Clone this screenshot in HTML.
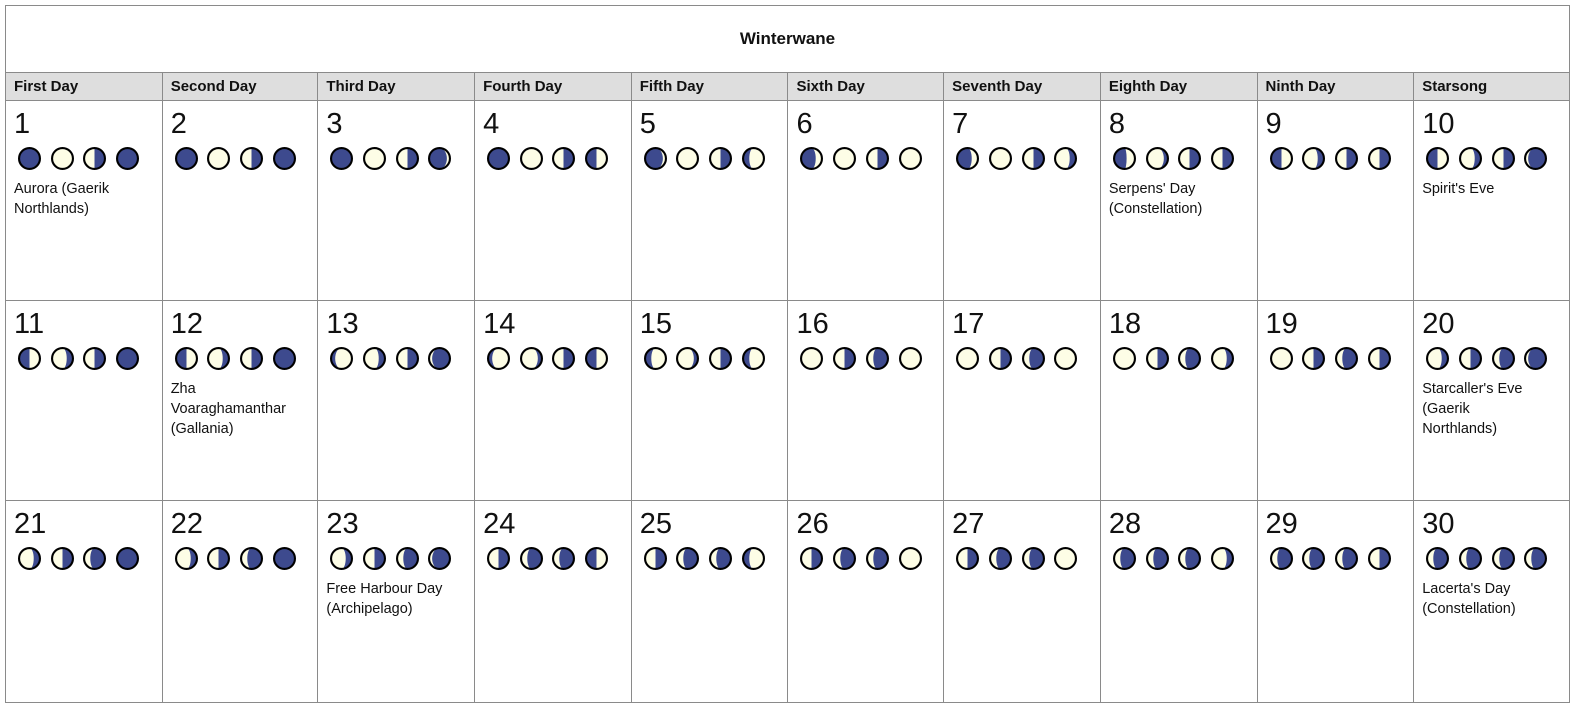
<!DOCTYPE html>
<html><head><meta charset="utf-8"><style>
body{margin:0;background:#fff;font-family:"Liberation Sans",sans-serif;color:#111}
table{position:absolute;left:5px;top:5px;width:1565px;border-collapse:collapse;table-layout:fixed}
td,th{border:1px solid #8a8a8a;padding:0}
.t{height:66px;text-align:center;font-weight:bold;font-size:17px}
th{background:#dedede;height:27px;text-align:left;font-size:15px;padding-left:8px;font-weight:bold}
td.c{vertical-align:top;height:199px;position:relative}
.n{position:absolute;left:8px;top:6px;font-size:29px;line-height:34px}
.m{position:absolute;left:12px;top:46px;height:24px;display:flex;gap:9.7px}
.m svg{width:23px;height:23px;display:block}
.e{position:absolute;left:8px;top:78px;font-size:14.5px;line-height:20px}
</style></head><body>
<svg width="0" height="0" style="position:absolute">
<defs>
<symbol id="L" viewBox="0 0 24 24"><circle cx="12" cy="12" r="10.9" fill="#fdfde6" stroke="#000" stroke-width="2.2"/></symbol>
<symbol id="D" viewBox="0 0 24 24"><circle cx="12" cy="12" r="10.9" fill="#3d4a8e" stroke="#000" stroke-width="2.2"/></symbol>
<symbol id="r2" viewBox="0 0 24 24"><circle cx="12" cy="12" r="11" fill="#fdfde6"/><path d="M12 1A11 11 0 0 1 12 23A6.6 11 0 0 0 12 1Z" fill="#3d4a8e"/><circle cx="12" cy="12" r="10.9" fill="none" stroke="#000" stroke-width="2.2"/></symbol>
<symbol id="r3" viewBox="0 0 24 24"><circle cx="12" cy="12" r="11" fill="#fdfde6"/><path d="M12 1A11 11 0 0 1 12 23A4.4 11 0 0 0 12 1Z" fill="#3d4a8e"/><circle cx="12" cy="12" r="10.9" fill="none" stroke="#000" stroke-width="2.2"/></symbol>
<symbol id="r5" viewBox="0 0 24 24"><circle cx="12" cy="12" r="11" fill="#fdfde6"/><path d="M12 1A11 11 0 0 1 12 23Z" fill="#3d4a8e"/><circle cx="12" cy="12" r="10.9" fill="none" stroke="#000" stroke-width="2.2"/></symbol>
<symbol id="r6" viewBox="0 0 24 24"><circle cx="12" cy="12" r="11" fill="#fdfde6"/><path d="M12 1A11 11 0 0 1 12 23A2.2 11 0 0 1 12 1Z" fill="#3d4a8e"/><circle cx="12" cy="12" r="10.9" fill="none" stroke="#000" stroke-width="2.2"/></symbol>
<symbol id="r7" viewBox="0 0 24 24"><circle cx="12" cy="12" r="11" fill="#fdfde6"/><path d="M12 1A11 11 0 0 1 12 23A4.4 11 0 0 1 12 1Z" fill="#3d4a8e"/><circle cx="12" cy="12" r="10.9" fill="none" stroke="#000" stroke-width="2.2"/></symbol>
<symbol id="r8" viewBox="0 0 24 24"><circle cx="12" cy="12" r="11" fill="#fdfde6"/><path d="M12 1A11 11 0 0 1 12 23A7.7 11 0 0 1 12 1Z" fill="#3d4a8e"/><circle cx="12" cy="12" r="10.9" fill="none" stroke="#000" stroke-width="2.2"/></symbol>
<symbol id="l2" viewBox="0 0 24 24"><use href="#r2" width="24" height="24" transform="matrix(-1 0 0 1 24 0)"/></symbol>
<symbol id="l3" viewBox="0 0 24 24"><use href="#r3" width="24" height="24" transform="matrix(-1 0 0 1 24 0)"/></symbol>
<symbol id="l5" viewBox="0 0 24 24"><use href="#r5" width="24" height="24" transform="matrix(-1 0 0 1 24 0)"/></symbol>
<symbol id="l6" viewBox="0 0 24 24"><use href="#r6" width="24" height="24" transform="matrix(-1 0 0 1 24 0)"/></symbol>
<symbol id="l7" viewBox="0 0 24 24"><use href="#r7" width="24" height="24" transform="matrix(-1 0 0 1 24 0)"/></symbol>
<symbol id="l8" viewBox="0 0 24 24"><use href="#r8" width="24" height="24" transform="matrix(-1 0 0 1 24 0)"/></symbol>
</defs></svg>
<table>
<colgroup><col style="width:156px"><col style="width:155px"><col style="width:156px"><col style="width:156px"><col style="width:156px"><col style="width:155px"><col style="width:156px"><col style="width:156px"><col style="width:156px"><col style="width:155px"></colgroup>
<tr><td class="t" colspan="10">Winterwane</td></tr>
<tr><th>First Day</th><th>Second Day</th><th>Third Day</th><th>Fourth Day</th><th>Fifth Day</th><th>Sixth Day</th><th>Seventh Day</th><th>Eighth Day</th><th>Ninth Day</th><th>Starsong</th></tr>
<tr>
<td class="c"><div class="n">1</div><div class="m"><svg><use href="#D"/></svg><svg><use href="#L"/></svg><svg><use href="#r5"/></svg><svg><use href="#D"/></svg></div><div class="e">Aurora (Gaerik<br>Northlands)</div></td>
<td class="c"><div class="n">2</div><div class="m"><svg><use href="#D"/></svg><svg><use href="#L"/></svg><svg><use href="#r5"/></svg><svg><use href="#D"/></svg></div></td>
<td class="c"><div class="n">3</div><div class="m"><svg><use href="#D"/></svg><svg><use href="#L"/></svg><svg><use href="#r5"/></svg><svg><use href="#l8"/></svg></div></td>
<td class="c"><div class="n">4</div><div class="m"><svg><use href="#D"/></svg><svg><use href="#L"/></svg><svg><use href="#r5"/></svg><svg><use href="#l5"/></svg></div></td>
<td class="c"><div class="n">5</div><div class="m"><svg><use href="#l8"/></svg><svg><use href="#L"/></svg><svg><use href="#r5"/></svg><svg><use href="#l3"/></svg></div></td>
<td class="c"><div class="n">6</div><div class="m"><svg><use href="#l7"/></svg><svg><use href="#L"/></svg><svg><use href="#r5"/></svg><svg><use href="#L"/></svg></div></td>
<td class="c"><div class="n">7</div><div class="m"><svg><use href="#l7"/></svg><svg><use href="#L"/></svg><svg><use href="#r5"/></svg><svg><use href="#r3"/></svg></div></td>
<td class="c"><div class="n">8</div><div class="m"><svg><use href="#l6"/></svg><svg><use href="#r2"/></svg><svg><use href="#r5"/></svg><svg><use href="#r5"/></svg></div><div class="e">Serpens' Day<br>(Constellation)</div></td>
<td class="c"><div class="n">9</div><div class="m"><svg><use href="#l5"/></svg><svg><use href="#r3"/></svg><svg><use href="#r5"/></svg><svg><use href="#r5"/></svg></div></td>
<td class="c"><div class="n">10</div><div class="m"><svg><use href="#l5"/></svg><svg><use href="#r3"/></svg><svg><use href="#r5"/></svg><svg><use href="#r8"/></svg></div><div class="e">Spirit's Eve</div></td>
</tr>
<tr>
<td class="c"><div class="n">11</div><div class="m"><svg><use href="#l5"/></svg><svg><use href="#r3"/></svg><svg><use href="#r5"/></svg><svg><use href="#D"/></svg></div></td>
<td class="c"><div class="n">12</div><div class="m"><svg><use href="#l5"/></svg><svg><use href="#r3"/></svg><svg><use href="#r5"/></svg><svg><use href="#D"/></svg></div><div class="e">Zha<br>Voaraghamanthar<br>(Gallania)</div></td>
<td class="c"><div class="n">13</div><div class="m"><svg><use href="#l2"/></svg><svg><use href="#r3"/></svg><svg><use href="#r5"/></svg><svg><use href="#r8"/></svg></div></td>
<td class="c"><div class="n">14</div><div class="m"><svg><use href="#l2"/></svg><svg><use href="#r2"/></svg><svg><use href="#r5"/></svg><svg><use href="#l5"/></svg></div></td>
<td class="c"><div class="n">15</div><div class="m"><svg><use href="#l3"/></svg><svg><use href="#r2"/></svg><svg><use href="#r5"/></svg><svg><use href="#l3"/></svg></div></td>
<td class="c"><div class="n">16</div><div class="m"><svg><use href="#L"/></svg><svg><use href="#r5"/></svg><svg><use href="#r7"/></svg><svg><use href="#L"/></svg></div></td>
<td class="c"><div class="n">17</div><div class="m"><svg><use href="#L"/></svg><svg><use href="#r5"/></svg><svg><use href="#r7"/></svg><svg><use href="#L"/></svg></div></td>
<td class="c"><div class="n">18</div><div class="m"><svg><use href="#L"/></svg><svg><use href="#r5"/></svg><svg><use href="#r7"/></svg><svg><use href="#r3"/></svg></div></td>
<td class="c"><div class="n">19</div><div class="m"><svg><use href="#L"/></svg><svg><use href="#r5"/></svg><svg><use href="#r7"/></svg><svg><use href="#r5"/></svg></div></td>
<td class="c"><div class="n">20</div><div class="m"><svg><use href="#r3"/></svg><svg><use href="#r5"/></svg><svg><use href="#r7"/></svg><svg><use href="#r8"/></svg></div><div class="e">Starcaller's Eve<br>(Gaerik<br>Northlands)</div></td>
</tr>
<tr>
<td class="c" style="height:201px"><div class="n">21</div><div class="m"><svg><use href="#r3"/></svg><svg><use href="#r5"/></svg><svg><use href="#r7"/></svg><svg><use href="#D"/></svg></div></td>
<td class="c"><div class="n">22</div><div class="m"><svg><use href="#r3"/></svg><svg><use href="#r5"/></svg><svg><use href="#r7"/></svg><svg><use href="#D"/></svg></div></td>
<td class="c"><div class="n">23</div><div class="m"><svg><use href="#r3"/></svg><svg><use href="#r5"/></svg><svg><use href="#r7"/></svg><svg><use href="#r8"/></svg></div><div class="e">Free Harbour Day<br>(Archipelago)</div></td>
<td class="c"><div class="n">24</div><div class="m"><svg><use href="#r5"/></svg><svg><use href="#r7"/></svg><svg><use href="#r7"/></svg><svg><use href="#l5"/></svg></div></td>
<td class="c"><div class="n">25</div><div class="m"><svg><use href="#r5"/></svg><svg><use href="#r7"/></svg><svg><use href="#r7"/></svg><svg><use href="#l3"/></svg></div></td>
<td class="c"><div class="n">26</div><div class="m"><svg><use href="#r5"/></svg><svg><use href="#r7"/></svg><svg><use href="#r7"/></svg><svg><use href="#L"/></svg></div></td>
<td class="c"><div class="n">27</div><div class="m"><svg><use href="#r5"/></svg><svg><use href="#r7"/></svg><svg><use href="#r7"/></svg><svg><use href="#L"/></svg></div></td>
<td class="c"><div class="n">28</div><div class="m"><svg><use href="#r7"/></svg><svg><use href="#r7"/></svg><svg><use href="#r7"/></svg><svg><use href="#r3"/></svg></div></td>
<td class="c"><div class="n">29</div><div class="m"><svg><use href="#r7"/></svg><svg><use href="#r7"/></svg><svg><use href="#r7"/></svg><svg><use href="#r5"/></svg></div></td>
<td class="c"><div class="n">30</div><div class="m"><svg><use href="#r7"/></svg><svg><use href="#r7"/></svg><svg><use href="#r7"/></svg><svg><use href="#r7"/></svg></div><div class="e">Lacerta's Day<br>(Constellation)</div></td>
</tr>
</table>
</body></html>
